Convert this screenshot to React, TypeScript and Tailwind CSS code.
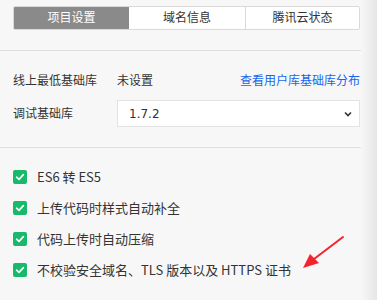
import React from "react";

const font = { fontFamily: '"DejaVu Sans", "Noto Sans CJK SC", sans-serif' };
const font2 = { fontFamily: '"Noto Sans CJK SC", "Noto Sans", sans-serif' };

function Check() {
  return (
    <span className="w-[14px] h-[14px] rounded-[2px] bg-[#19b96b] flex items-center justify-center shrink-0">
      <svg width="10" height="10" viewBox="0 0 10 10" fill="none">
        <path d="M1.6 5.2 L4 7.4 L8.4 2.6" stroke="white" strokeWidth="1.6" strokeLinecap="round" strokeLinejoin="round" />
      </svg>
    </span>
  );
}

const items = ["ES6 转 ES5", "上传代码时样式自动补全", "代码上传时自动压缩", "不校验安全域名、TLS 版本以及 HTTPS 证书"];

export default function App() {
  return (
    <div className="relative w-[377px] h-[300px] overflow-hidden bg-[#f7f7f7] text-[12px] text-[#333]" style={font}>
      <div className="absolute right-0 top-0 h-full w-[16px] bg-gradient-to-r from-[#f7f7f7] to-[#e6e6e6]" />
      <div className="pt-[6px] px-[13px] pr-[17px]">
        <div className="flex h-[24px] border border-[#d9d9d9] rounded-[2px] overflow-hidden">
          <div className="w-[115px] bg-[#8a8a8a] text-white flex items-center justify-center">项目设置</div>
          <div className="w-[117px] bg-white border-r border-[#d9d9d9] flex items-center justify-center">域名信息</div>
          <div className="flex-1 bg-white flex items-center justify-center">腾讯云状态</div>
        </div>
      </div>
      <div className="mt-[20px] h-px bg-[#dedede]" />
      <div className="px-[13px] pr-[17px]">
        <div className="flex items-center h-[20px] mt-[20px]">
          <span className="w-[104px]">线上最低基础库</span>
          <span className="flex-1">未设置</span>
          <span className="text-[#1565f0]">查看用户库基础库分布</span>
        </div>
        <div className="flex items-center mt-[9px]">
          <span className="w-[104px]">调试基础库</span>
          <div className="flex-1 h-[27px] bg-white border border-[#e3e3e3] flex items-center justify-between pl-[11px] pr-[6px]">
            <span>1.7.2</span>
            <svg width="10" height="10" viewBox="0 0 10 10" fill="none">
              <path d="M2 3.5 L5 6.5 L8 3.5" stroke="#333" strokeWidth="1.6" />
            </svg>
          </div>
        </div>
      </div>
      <div className="mt-[20px] h-px bg-[#dedede]" />
      <div className="px-[13px] pt-[20px] flex flex-col gap-[13px] text-[13px]" style={font2}>
        {items.map((t) => (
          <div key={t} className="flex items-center gap-[10px] h-[18px]">
            <Check />
            <span>{t}</span>
          </div>
        ))}
      </div>
      <svg className="absolute left-0 top-0" width="377" height="300" viewBox="0 0 377 300">
        <path d="M343 237 L314 259" stroke="#f5232e" strokeWidth="2" strokeLinecap="round" />
        <path d="M303 268 L310 254 L319 263 Z" fill="#f5232e" />
      </svg>
    </div>
  );
}
